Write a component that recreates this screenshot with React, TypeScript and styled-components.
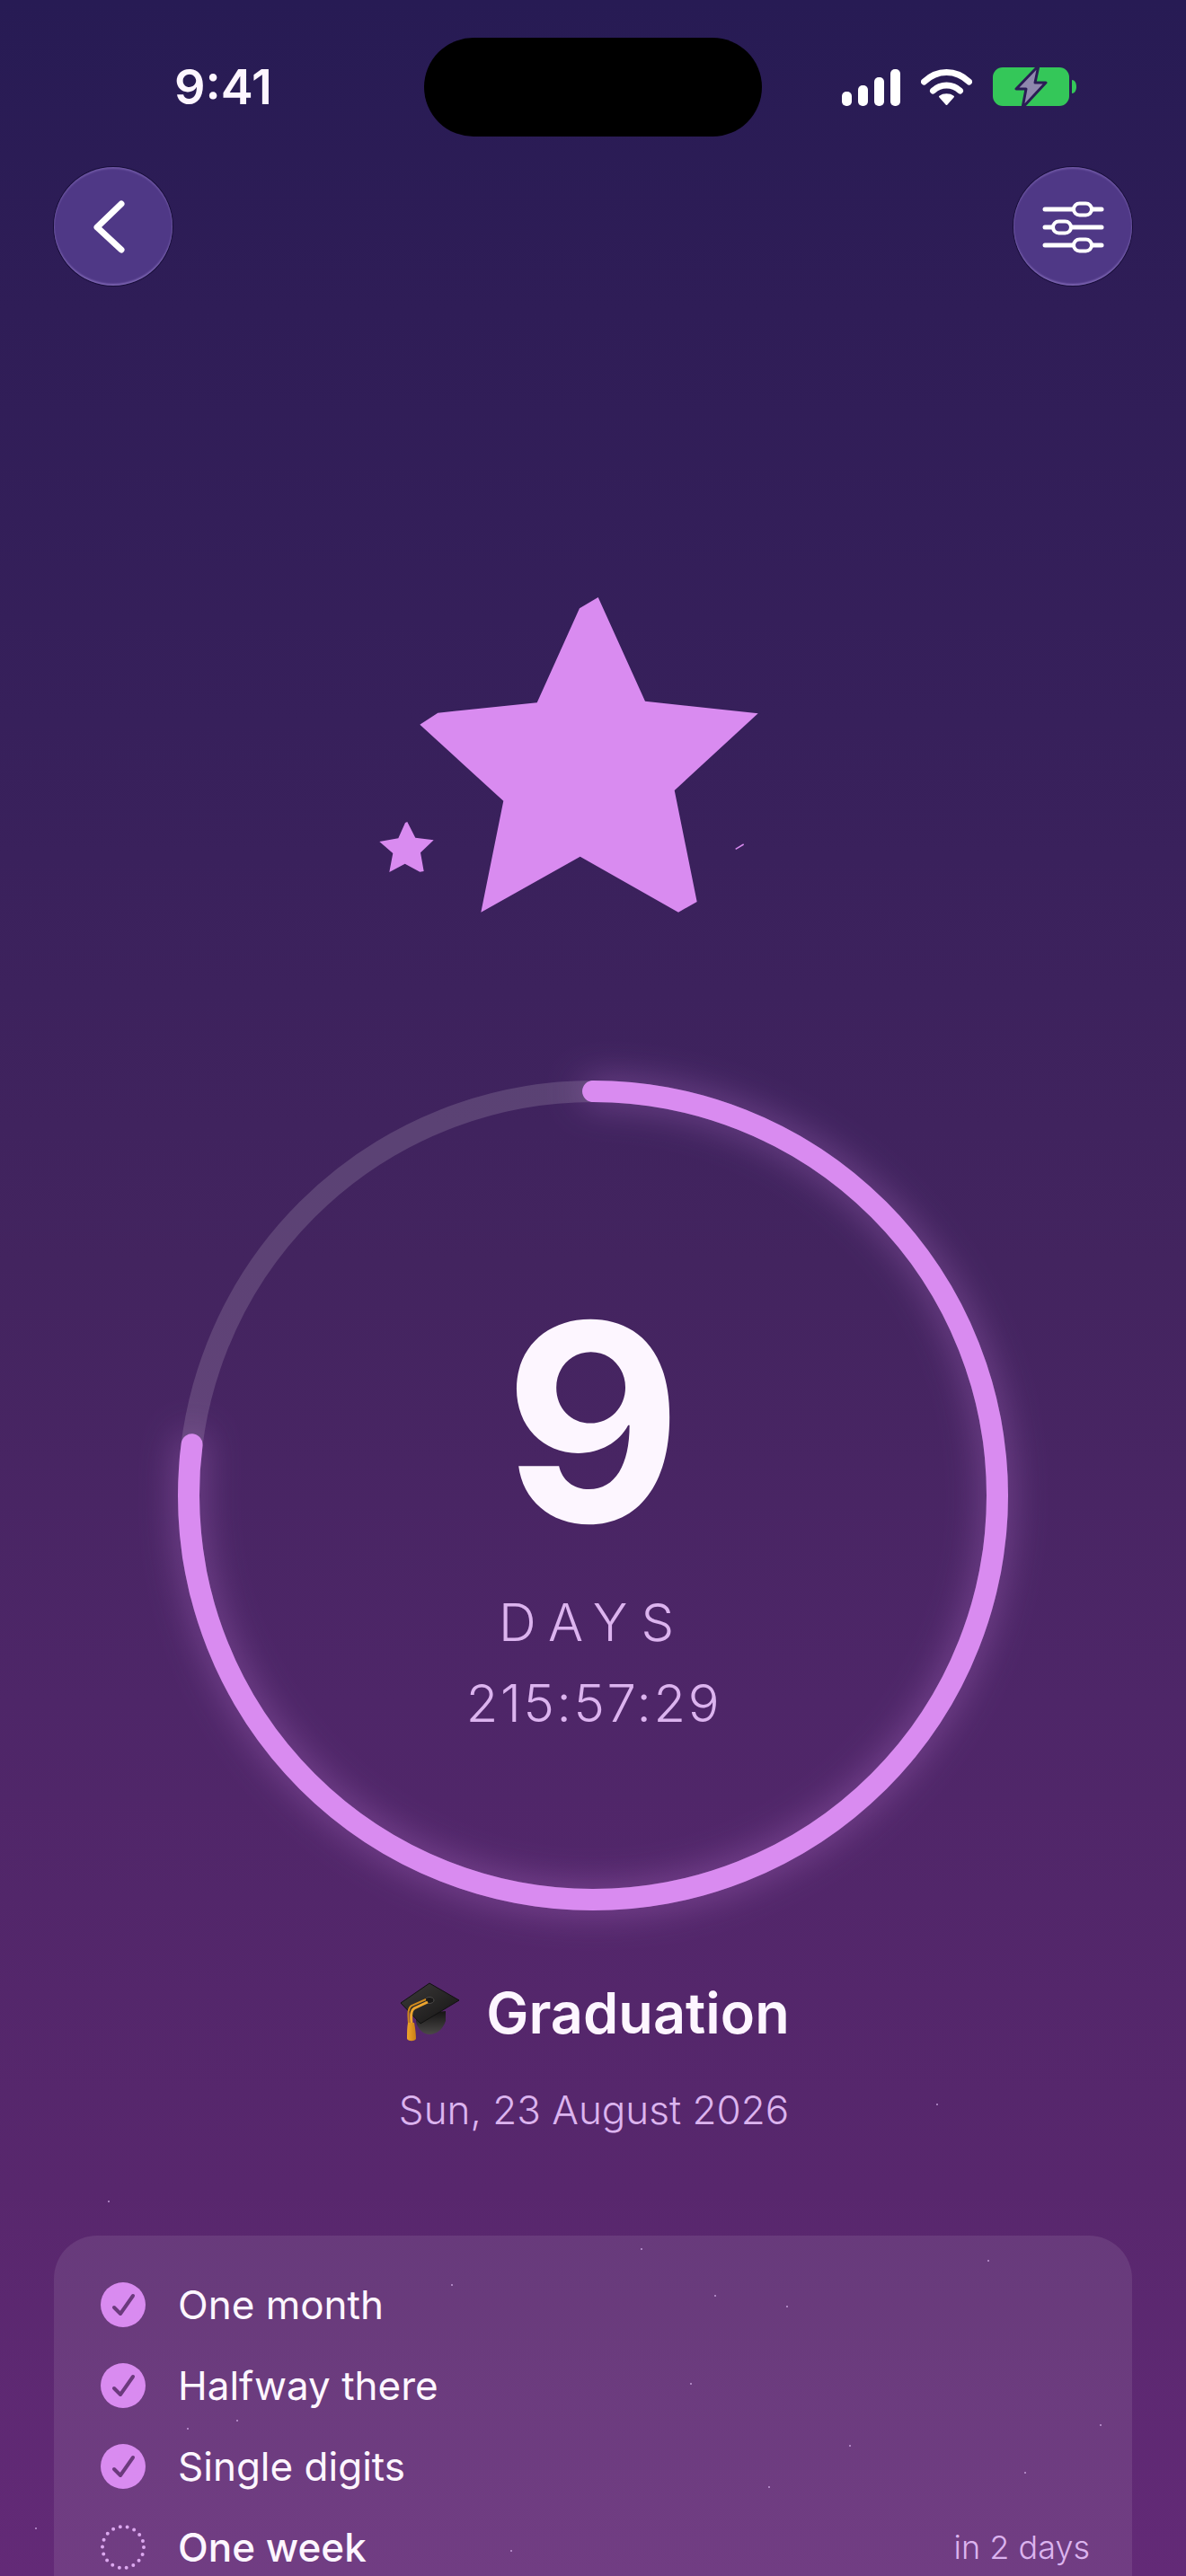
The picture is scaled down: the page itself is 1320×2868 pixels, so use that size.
import React from 'react';
import styled, { createGlobalStyle } from 'styled-components';

const ACCENT = '#d98bf0';
const LILAC = '#dcb4ef';
const PAPER = '#fdf6ff';

const GlobalStyle = createGlobalStyle`
  html, body {
    margin: 0;
    padding: 0;
    background: #271b54;
  }
  * {
    box-sizing: border-box;
  }
`;

const RING_RADIUS = 450;
const RING_PROGRESS = 0.77;

const milestones = [
  { label: 'One month', done: true },
  { label: 'Halfway there', done: true },
  { label: 'Single digits', done: true },
  { label: 'One week', done: false, note: 'in 2 days' },
];

const specks = [
  [120, 2450], [713, 2503], [1099, 2516], [502, 2543], [795, 2555],
  [875, 2567], [768, 2653], [263, 2694], [208, 2703], [1224, 2699],
  [945, 2722], [1140, 2752], [855, 2768], [39, 2814], [568, 2839],
  [1042, 2342],
];

const SignalIcon = () => (
  <svg width="65" height="41" viewBox="0 0 65 41" fill="#fff">
    <rect x="0" y="25" width="11" height="16" rx="5" />
    <rect x="18" y="18" width="11" height="23" rx="5" />
    <rect x="36" y="9" width="11" height="32" rx="5" />
    <rect x="54" y="0" width="11" height="41" rx="5" />
  </svg>
);

const WifiIcon = () => (
  <svg width="57" height="41" viewBox="0 0 57 41" fill="none" stroke="#fff" strokeWidth="7" strokeLinecap="round">
    <path d="M3.5 14 C18 0 39 0 53.5 14" />
    <path d="M13.5 24 C22 16 35 16 43.5 24" />
    <path d="M21 30.5 C25 27.5 32 27.5 36 30.5 L28.5 39 Z" fill="#fff" strokeWidth="2" strokeLinejoin="round" />
  </svg>
);

const BatteryIcon = () => (
  <svg width="93" height="48" viewBox="0 0 93 48" fill="none">
    <rect x="0" y="2" width="85" height="43" rx="11" fill="#34c759" />
    <path d="M88 16 C91 16 93 19 93 23.5 C93 28 91 31 88 31 Z" fill="#34c759" />
    <path
      d="M51 0 L26 26 L37 26 L33 47 L59 19 L47 19 Z"
      fill="#8f88ad"
      stroke="#2a1c55"
      strokeWidth="3"
      strokeLinejoin="round"
    />
  </svg>
);

const ChevronIcon = () => (
  <svg width="132" height="132" viewBox="0 0 132 132" fill="none" stroke="#fff" strokeWidth="7" strokeLinecap="round" strokeLinejoin="round">
    <path d="M75 41 L48 67 L75 92" />
  </svg>
);

const SlidersIcon = () => (
  <svg width="132" height="132" viewBox="0 0 132 132" fill="none" stroke="#fff" strokeLinecap="round">
    {[[47, 77], [67, 54], [87, 77]].map(([y, x]) => (
      <g key={y}>
        <line x1="35" y1={y} x2="98" y2={y} strokeWidth="5" />
        <rect x={x - 10} y={y - 6.5} width="20" height="13" rx="6.5" fill="#4f3886" strokeWidth="4" />
      </g>
    ))}
  </svg>
);

const StarScene = () => (
  <svg width="560" height="420" viewBox="0 0 560 420" fill={ACCENT}>
    <polygon points="285.7,45 265,57.3 217.7,162.3 107.3,173.7 87.3,186.7 180.3,271.7 155.3,395.7 265.7,333.7 375,395.7 395.7,384 370.7,260 463.7,174.3 338,160.7" />
    <polygon points="73.3,295 71,296 63.3,313.3 42.3,317 57.3,330 53.3,351 70.7,341.7 87.3,350.7 91.7,350 88,329.3 102.7,315.3 82.3,312.7" />
    <line x1="438.7" y1="325.3" x2="447.7" y2="320" stroke={ACCENT} strokeWidth="1.5" />
  </svg>
);

const GradCapIcon = () => (
  <svg width="72" height="72" viewBox="0 0 72 72">
    <defs>
      <linearGradient id="capTop" x1="0" y1="0" x2="1" y2="1">
        <stop offset="0" stopColor="#3d3b3a" />
        <stop offset="1" stopColor="#141313" />
      </linearGradient>
      <linearGradient id="capBowl" x1="0" y1="0" x2="0" y2="1">
        <stop offset="0" stopColor="#151414" />
        <stop offset="1" stopColor="#4a4847" />
      </linearGradient>
      <linearGradient id="tassel" x1="0" y1="0" x2="1" y2="0">
        <stop offset="0" stopColor="#f0a52c" />
        <stop offset="1" stopColor="#c97f15" />
      </linearGradient>
    </defs>
    <path d="M20 38 L53 34 L53 45 C50 55 42 60 35 60 C28 60 22 54 20 46 Z" fill="url(#capBowl)" />
    <path d="M35 3 L68 22 L25 48 L3 25 Z" fill="url(#capTop)" stroke="#111" strokeWidth="1" strokeLinejoin="round" />
    <ellipse cx="35" cy="22" rx="5" ry="3.5" fill="#1a1919" stroke="#4c4a49" strokeWidth="1" />
    <path d="M33 24 L18 31 C15 33 14 36 15 48" fill="none" stroke="#eda52e" strokeWidth="3" />
    <path d="M31 21 L15 28 C11 31 11 36 12 48" fill="none" stroke="#d18a1c" strokeWidth="2" />
    <path d="M11 47 L18 47 C19 52 20 60 20 65 C18 68 12 68 10 65 C10 60 10 52 11 47 Z" fill="url(#tassel)" />
  </svg>
);

const CheckBadge = () => (
  <svg width="50" height="50" viewBox="0 0 50 50" fill="none">
    <circle cx="25" cy="25" r="25" fill={ACCENT} />
    <path d="M15 28 L22 35 L36 15" stroke="#6b3a7d" strokeWidth="4" strokeLinecap="round" strokeLinejoin="round" />
  </svg>
);

const PendingBadge = () => (
  <svg width="50" height="50" viewBox="0 0 50 50" fill="none">
    <circle cx="25" cy="25" r="23" stroke="#dca8ef" strokeWidth="4" strokeLinecap="round" strokeDasharray="0 8.03" />
  </svg>
);

const App = () => {
  const circumference = 2 * Math.PI * RING_RADIUS;

  return (
    <Page>
      <GlobalStyle />
      <StatusBar>
        <Clock>9:41</Clock>
        <Island />
        <StatusIcons>
          <SignalIcon />
          <WifiIcon />
          <BatteryIcon />
        </StatusIcons>
      </StatusBar>

      <TopBar>
        <RoundButton aria-label="Back"><ChevronIcon /></RoundButton>
        <RoundButton aria-label="Settings"><SlidersIcon /></RoundButton>
      </TopBar>

      <Hero><StarScene /></Hero>

      <Ring>
        <RingArt width="924" height="924" viewBox="0 0 924 924" fill="none">
          <circle cx="462" cy="462" r={RING_RADIUS} stroke="rgba(255,255,255,0.14)" strokeWidth="24" />
          <ProgressArc
            cx="462"
            cy="462"
            r={RING_RADIUS}
            stroke={ACCENT}
            strokeWidth="24"
            strokeLinecap="round"
            strokeDasharray={`${circumference * RING_PROGRESS} ${circumference}`}
            transform="rotate(-90 462 462)"
          />
        </RingArt>
        <BigNumber>9</BigNumber>
        <DaysLabel>DAYS</DaysLabel>
        <Countdown>215:57:29</Countdown>
      </Ring>

      <TitleRow>
        <GradCapIcon />
        <Title>Graduation</Title>
      </TitleRow>
      <DateLine>Sun, 23 August 2026</DateLine>

      <Card>
        {milestones.map(item => (
          <Row key={item.label}>
            {item.done ? <CheckBadge /> : <PendingBadge />}
            <RowLabel $active={!item.done}>{item.label}</RowLabel>
            {item.note && <RowNote>{item.note}</RowNote>}
          </Row>
        ))}
      </Card>

      {specks.map(([x, y]) => (
        <Speck key={`${x}-${y}`} $x={x} $y={y} />
      ))}
    </Page>
  );
};

const Page = styled.div`
  position: relative;
  width: 1320px;
  height: 2868px;
  overflow: hidden;
  font-family: Inter, "Liberation Sans", sans-serif;
  color: ${PAPER};
  background: linear-gradient(
    180deg,
    #271b54 0%,
    #2f1d57 12%,
    #37205b 28%,
    #43245f 49%,
    #4e2668 66%,
    #58276d 85%,
    #632a77 100%
  );
`;

const StatusBar = styled.div`
  display: grid;
  grid-template-columns: 472px 376px 472px;
  align-items: center;
  padding-top: 42px;
`;

const Clock = styled.div`
  padding-left: 194px;
  font-size: 54px;
  font-weight: 600;
  line-height: 110px;
`;

const Island = styled.div`
  height: 110px;
  border-radius: 55px;
  background: #000;
`;

const StatusIcons = styled.div`
  display: flex;
  align-items: center;
  gap: 23px;
  padding-left: 89px;
  svg {
    display: block;
  }
`;

const TopBar = styled.div`
  display: flex;
  justify-content: space-between;
  margin-top: 34px;
  padding: 0 60px;
`;

const RoundButton = styled.button`
  width: 132px;
  height: 132px;
  padding: 0;
  border: 0;
  border-radius: 50%;
  background: #4f3886;
  box-shadow:
    0 0 0 1px rgba(15, 8, 45, 0.7),
    inset 0 2px 2px rgba(190, 165, 240, 0.28),
    inset 0 -2px 2px rgba(190, 165, 240, 0.4);
  svg {
    display: block;
  }
`;

const Hero = styled.div`
  display: flex;
  justify-content: center;
  margin-top: 302px;
  height: 420px;
`;

const Ring = styled.div`
  position: relative;
  display: flex;
  flex-direction: column;
  align-items: center;
  width: 924px;
  height: 924px;
  margin: 163px auto 0;
  padding-top: 228px;
`;

const RingArt = styled.svg`
  position: absolute;
  top: 0;
  left: 0;
  overflow: visible;
`;

const ProgressArc = styled.circle`
  filter: drop-shadow(0 0 20px rgba(217, 139, 240, 0.4));
`;

const BigNumber = styled.div`
  position: relative;
  font-size: 305px;
  font-weight: 700;
  line-height: 305px;
`;

const DaysLabel = styled.div`
  position: relative;
  margin-top: 38px;
  font-size: 58px;
  font-weight: 300;
  line-height: 64px;
  letter-spacing: 15px;
  color: ${LILAC};
`;

const Countdown = styled.div`
  position: relative;
  margin-top: 24px;
  padding-left: 2px;
  font-size: 58px;
  font-weight: 300;
  line-height: 68px;
  letter-spacing: 2.6px;
  color: ${LILAC};
`;

const TitleRow = styled.div`
  display: flex;
  align-items: center;
  justify-content: center;
  gap: 26px;
  margin-top: 78px;
  padding-left: 2px;
  height: 72px;
`;

const Title = styled.h1`
  margin: 0;
  font-size: 63px;
  font-weight: 600;
  line-height: 72px;
`;

const DateLine = styled.div`
  margin-top: 45px;
  padding-left: 2px;
  font-size: 44px;
  font-weight: 300;
  line-height: 54px;
  text-align: center;
  color: ${LILAC};
`;

const Card = styled.section`
  display: flex;
  flex-direction: column;
  gap: 40px;
  margin: 113px 60px 0;
  padding: 52px 47px 0 52px;
  min-height: 500px;
  border-radius: 48px;
  background: rgba(255, 255, 255, 0.09);
`;

const Row = styled.div`
  display: flex;
  align-items: center;
  height: 50px;
  svg {
    flex: none;
    display: block;
  }
`;

const RowLabel = styled.span<{ $active: boolean }>`
  margin-left: 36px;
  font-size: 44px;
  font-weight: ${p => (p.$active ? 500 : 400)};
  line-height: 50px;
`;

const RowNote = styled.span`
  margin-left: auto;
  font-size: 36px;
  font-weight: 300;
  color: ${LILAC};
`;

const Speck = styled.i<{ $x: number; $y: number }>`
  position: absolute;
  left: ${p => p.$x}px;
  top: ${p => p.$y}px;
  width: 2px;
  height: 2px;
  border-radius: 50%;
  background: rgba(225, 190, 245, 0.75);
`;

export default App;
